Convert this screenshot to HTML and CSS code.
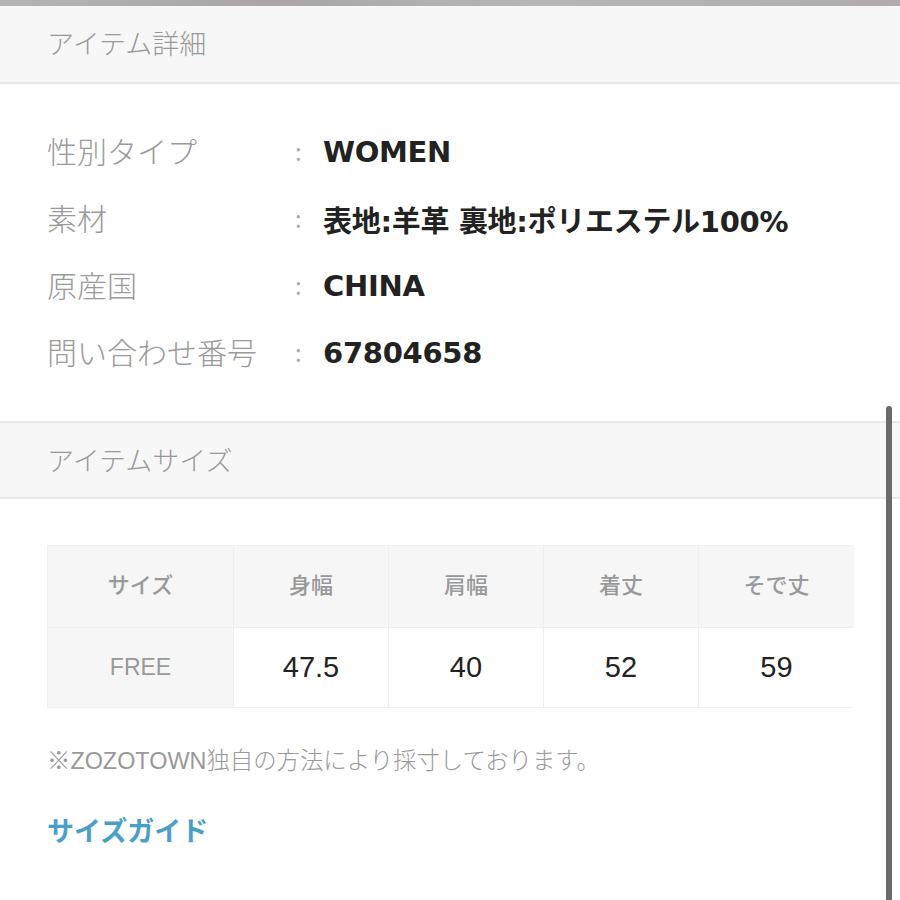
FILE: index.html
```html
<!DOCTYPE html>
<html lang="ja">
<head>
    <meta charset="UTF-8">
    <meta name="viewport" content="width=device-width, initial-scale=1.0">
    <title>アイテム詳細</title>
    <link rel="stylesheet" href="styles.css">
</head>
<body>
    <div class="top-strip"></div>

    <div class="section-head">アイテム詳細</div>
    <div class="spec-list">
        <div class="spec-row">
            <div class="spec-label">性別タイプ</div>
            <div class="spec-colon">:</div>
            <div class="spec-value">WOMEN</div>
        </div>
        <div class="spec-row">
            <div class="spec-label">素材</div>
            <div class="spec-colon">:</div>
            <div class="spec-value">表地:羊革 裏地:ポリエステル100%</div>
        </div>
        <div class="spec-row">
            <div class="spec-label">原産国</div>
            <div class="spec-colon">:</div>
            <div class="spec-value">CHINA</div>
        </div>
        <div class="spec-row">
            <div class="spec-label">問い合わせ番号</div>
            <div class="spec-colon">:</div>
            <div class="spec-value">67804658</div>
        </div>
    </div>

    <div class="section-head with-top">アイテムサイズ</div>
    <div class="size-area">
        <div class="size-table">
            <div class="cell head">サイズ</div>
            <div class="cell head">身幅</div>
            <div class="cell head">肩幅</div>
            <div class="cell head">着丈</div>
            <div class="cell head">そで丈</div>
            <div class="cell head size-name">FREE</div>
            <div class="cell">47.5</div>
            <div class="cell">40</div>
            <div class="cell">52</div>
            <div class="cell">59</div>
        </div>
        <p class="size-note">※ZOZOTOWN独自の方法により採寸しております。</p>
        <a class="size-guide" href="#">サイズガイド</a>
    </div>

    <div class="scrollbar"></div>
</body>
</html>
```

FILE: styles.css
```css
body {
    margin: 0;
    padding: 0;
    background-color: #fff;
    font-family: "Noto Sans CJK JP", "Liberation Sans", sans-serif;
    color: #222;
    height: 900px;
    overflow: hidden;
}
.top-strip {
    height: 6px;
    background: linear-gradient(90deg, #b4b4b4, #aaa6a8 30%, #b6b6b6 60%, #b0acae);
}
.section-head {
    height: 78px;
    box-sizing: border-box;
    display: flex;
    align-items: center;
    padding: 0 0 4px 47px;
    background-color: #f7f7f7;
    border-bottom: 2px solid #e8e8e8;
    font-size: 27px;
    font-weight: 300;
    color: #999;
}
.section-head.with-top {
    border-top: 2px solid #e8e8e8;
    padding-bottom: 2px;
}
.spec-list {
    padding: 34px 0 35px 47px;
}
.spec-row {
    display: grid;
    grid-template-columns: 248px 28px auto;
    align-items: center;
    height: 67px;
}
.spec-label {
    font-size: 30px;
    font-weight: 300;
    color: #9a9a9a;
    padding-bottom: 3px;
}
.spec-colon {
    font-size: 24px;
    color: #aaa;
    padding-bottom: 3px;
}
.spec-value {
    font-family: "DejaVu Sans", "Noto Sans CJK JP", sans-serif;
    font-size: 29px;
    font-weight: 700;
    color: #222;
    letter-spacing: -0.3px;
}
.size-area {
    padding: 46px 47px 0 47px;
}
.size-table {
    display: grid;
    grid-template-columns: 185px 154px 154px 154px 155px;
    grid-template-rows: 81px 79px;
    gap: 1px;
    width: 806px;
    background-color: #eeeeee;
    border: 1px solid #f0f0f0;
    box-sizing: border-box;
}
.cell {
    display: flex;
    align-items: center;
    justify-content: center;
    background-color: #fff;
    font-family: "Liberation Sans", "Noto Sans CJK JP", sans-serif;
    font-size: 29px;
    color: #222;
}
.cell.head {
    background-color: #f6f6f6;
    font-family: "Noto Sans CJK JP", sans-serif;
    font-size: 22px;
    font-weight: 500;
    color: #999;
    padding-bottom: 7px;
}
.cell.size-name {
    font-family: "Liberation Sans", sans-serif;
    font-size: 23px;
    font-weight: 400;
    padding-bottom: 0;
}
.size-note {
    margin: 38px 0 0 0;
    line-height: 30px;
    font-family: "Liberation Sans", "Noto Sans CJK JP", sans-serif;
    font-size: 23.4px;
    font-weight: 300;
    color: #999;
}
.size-guide {
    display: inline-block;
    margin-top: 39px;
    line-height: 30px;
    font-size: 27px;
    font-weight: 700;
    color: #4a9fc8;
    text-decoration: none;
}
.scrollbar {
    position: absolute;
    top: 406px;
    left: 886px;
    width: 6px;
    height: 494px;
    border-radius: 3px 3px 0 0;
    background-color: #6a6a6a;
}
```
